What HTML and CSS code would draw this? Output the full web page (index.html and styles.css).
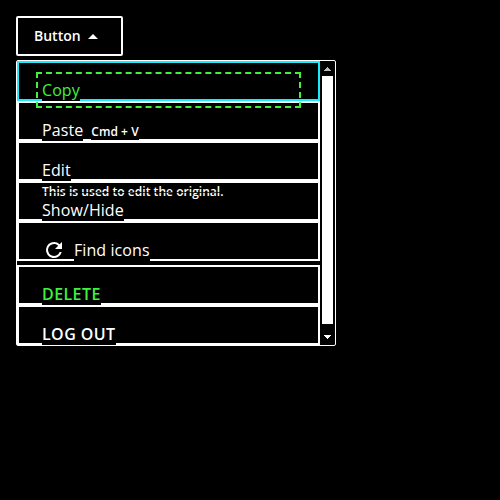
FILE: index.html
```
<!DOCTYPE html>
<html lang="en">
<head>
<meta charset="utf-8">
<title>Menu button</title>
<link rel="stylesheet" href="styles.css">
</head>
<body>
<button class="trigger">Button <svg width="10" height="5" viewBox="0 0 10 5"><path d="M0 5L5 0L10 5Z" fill="#fff"/></svg></button>
<div class="menu">
  <ul class="list">
    <li class="item focused"><span class="text">Copy</span><span class="ring"></span></li>
    <li class="item"><span class="text">Paste</span><span class="shortcut">Cmd + V</span></li>
    <li class="item"><span class="text">Edit</span><span class="description">This is used to edit the original.</span></li>
    <li class="item"><span class="text">Show/Hide</span></li>
    <li class="item"><svg class="icon" width="24" height="24" viewBox="0 0 24 24"><path fill="#fff" d="M17.65 6.35A7.96 7.96 0 0 0 12 4a8 8 0 1 0 7.73 10h-2.08A6 6 0 1 1 12 6c1.66 0 3.14.69 4.22 1.78L13 11h7V4z"/></svg><span class="text">Find icons</span></li>
    <li class="item separated danger"><span class="text strong">DELETE</span></li>
    <li class="item"><span class="text strong">LOG OUT</span></li>
  </ul>
  <div class="scrollbar">
    <svg width="7" height="4" viewBox="0 0 7 4" shape-rendering="crispEdges"><path d="M3 0h1v1h1v1h1v1h1v1H0V3h1V2h1V1h1z" fill="#bbb"/></svg>
    <div class="thumb"></div>
    <svg width="7" height="4" viewBox="0 0 7 4" shape-rendering="crispEdges"><path d="M0 0h7v1H6v1H5v1H4v1H3V3H2V2H1V1H0z" fill="#fff"/></svg>
  </div>
</div>
</body>
</html>
```
FILE: styles.css
```
* { box-sizing: border-box; }
body {
  margin: 0;
  padding: 16px;
  background: #000;
  color: #fff;
  font: 16px/22px "Open Sans", sans-serif;
}
.trigger {
  display: flex;
  align-items: center;
  gap: 7px;
  width: 107px;
  height: 40px;
  padding: 0 16px;
  border: 2px solid #fff;
  border-radius: 2px;
  background: #000;
  color: #fff;
  font: 600 14px/20px "Open Sans", sans-serif;
}
.menu {
  display: flex;
  width: 320px;
  height: 286px;
  margin-top: 4px;
  border: 1px solid #fff;
  border-radius: 2px;
}
.list {
  width: 303px;
  margin: 0;
  padding: 0;
  list-style: none;
}
.item {
  position: relative;
  display: flex;
  height: 40px;
  padding: 16px 0 0 23px;
  border: 2px solid #fff;
}
.focused { border-color: #1aebff; color: #3ff23f; z-index: 1; }
.danger { color: #3ff23f; }
.separated { margin-top: 4px; }
.text { height: 22px; background: #000; white-space: nowrap; letter-spacing: 0.08px; }
.strong { font-weight: 600; letter-spacing: 0.42px; }
.shortcut {
  height: 17px;
  margin: 4px 0 0 8px;
  background: #000;
  font: 600 12px/17px "Open Sans", sans-serif;
  letter-spacing: 0.05px;
}
.description {
  position: absolute;
  z-index: 1;
  left: 23px;
  top: 40px;
  height: 17px;
  font: 600 12px/17px "Open Sans", sans-serif;
  letter-spacing: 0.04px;
}
/* thin seam across the description line */
.description::after {
  content: "";
  position: absolute;
  left: 0;
  right: 0;
  top: 9px;
  height: 1px;
  background: rgba(0, 0, 0, 0.75);
}
.ring {
  position: absolute;
  left: 17px;
  top: 9px;
  width: 265px;
  height: 36px;
  border: 2px dashed #3ff23f;
}
.icon { margin: -1px 8px 0 0; }
.scrollbar {
  display: flex;
  flex-direction: column;
  align-items: center;
  width: 15px;
  padding: 6px 0;
}
.thumb { width: 11px; height: 248px; margin: 5px 0 11px; background: #fff; }
```
